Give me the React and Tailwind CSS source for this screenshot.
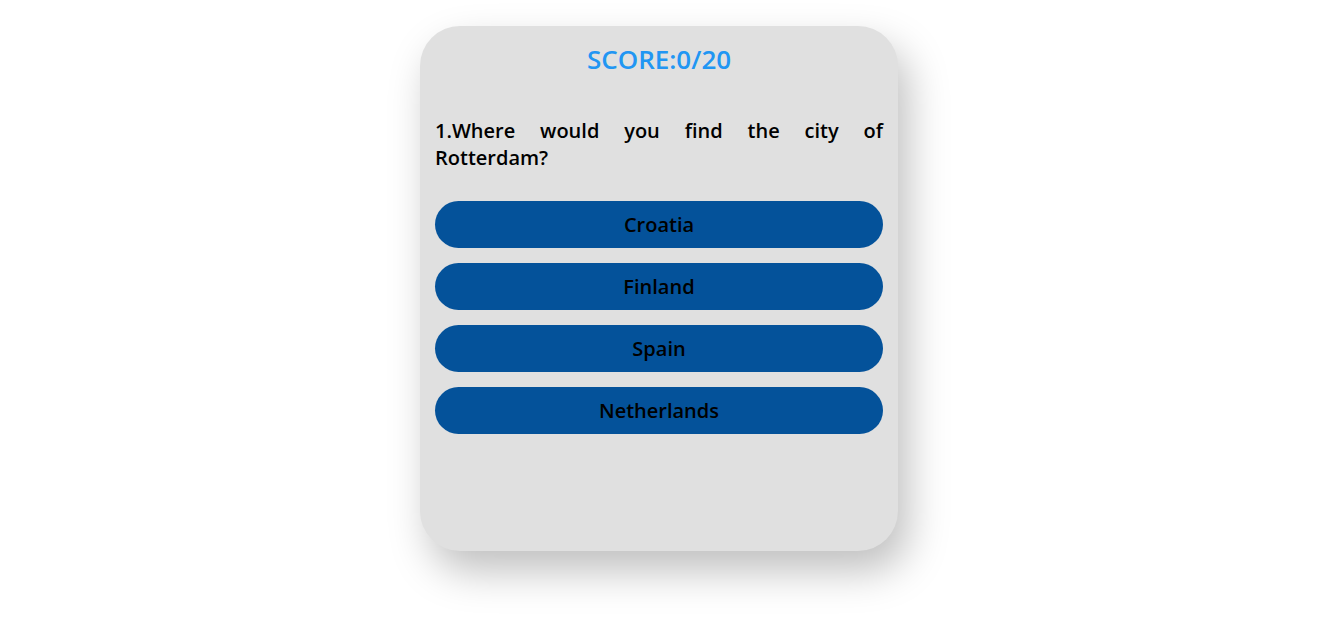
export default function App() {
  const options = ["Croatia", "Finland", "Spain", "Netherlands"];
  return (
    <div className="min-h-[617px] w-full bg-white" style={{ fontFamily: '"Open Sans", sans-serif' }}>
      <div className="flex w-[1318px] justify-center pt-[26px]">
        <div className="flex h-[525px] w-[478px] flex-col rounded-[40px] bg-[#e0e0e0] px-[15px] pt-[16px] shadow-[10px_20px_40px_rgba(0,0,0,0.25)]">
          <h1 className="text-center text-[26px] font-semibold leading-[35px] text-[#2196f3]">SCORE:0/20</h1>
          <p className="mt-[40px] text-justify text-[20px] font-semibold leading-[27px] text-black">
            1.Where would you find the city of Rotterdam?
          </p>
          <div className="mt-[30px] flex flex-col gap-[15px]">
            {options.map((o) => (
              <button
                key={o}
                className="h-[47px] w-full rounded-full bg-[#04529a] text-center text-[20px] font-semibold text-black"
              >
                {o}
              </button>
            ))}
          </div>
        </div>
      </div>
    </div>
  );
}
